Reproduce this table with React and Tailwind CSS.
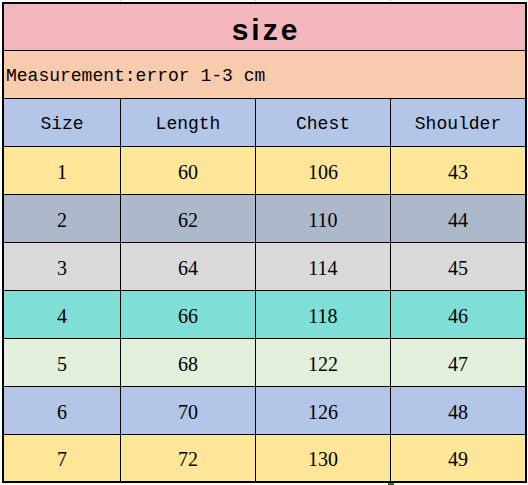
import React from "react";

const rows = [
  { size: "1", length: "60", chest: "106", shoulder: "43", bg: "bg-[#FFE699]" },
  { size: "2", length: "62", chest: "110", shoulder: "44", bg: "bg-[#ADB9CA]" },
  { size: "3", length: "64", chest: "114", shoulder: "45", bg: "bg-[#D9D9D9]" },
  { size: "4", length: "66", chest: "118", shoulder: "46", bg: "bg-[#7FDED6]" },
  { size: "5", length: "68", chest: "122", shoulder: "47", bg: "bg-[#E2EFDA]" },
  { size: "6", length: "70", chest: "126", shoulder: "48", bg: "bg-[#B4C6E7]" },
  { size: "7", length: "72", chest: "130", shoulder: "49", bg: "bg-[#FFE699]" },
];

const headers = ["Size", "Length", "Chest", "Shoulder"];

function App() {
  return (
    <div className="w-[528px] h-[485px] bg-white overflow-hidden">
      {/* faint sheet gridlines above the table */}
      <div className="h-[2px] ml-[2px] grid grid-cols-[119px_135px_135px_134px]">
        <div className="border-r border-[#d4d4d4]" />
        <div className="border-r border-[#d4d4d4]" />
        <div className="border-r border-[#d4d4d4]" />
        <div />
      </div>

      <div className="flex ml-[2px]">
        <div className="w-[525px] border-2 border-black text-black">
          <div className="h-[47px] border-b border-black bg-[#F4B6BD] flex items-center justify-center">
            <span className="text-[30px] font-bold tracking-[3px] pl-[3px] pt-[4px] font-['Liberation_Sans',sans-serif]">
              size
            </span>
          </div>

          <div className="h-[48px] border-b border-black bg-[#F8CBAD] flex items-center pl-[2px] pt-[3px]">
            <span className="text-[18px] font-['Liberation_Mono',monospace]">
              Measurement:error 1-3 cm
            </span>
          </div>

          <div className="h-[48px] border-b border-black bg-[#B4C6E7] grid grid-cols-[117px_135px_135px_134px]">
            {headers.map((h, i) => (
              <div
                key={h}
                className={`flex items-center justify-center pt-[3px] text-[18px] font-['Liberation_Mono',monospace] ${
                  i < 3 ? "border-r border-black" : ""
                }`}
              >
                {h}
              </div>
            ))}
          </div>

          {rows.map((r, idx) => (
            <div
              key={r.size}
              className={`${idx < rows.length - 1 ? "h-[48px] border-b border-black" : "h-[46px]"} ${r.bg} grid grid-cols-[117px_135px_135px_134px]`}
            >
              {[r.size, r.length, r.chest, r.shoulder].map((v, i) => (
                <div
                  key={i}
                  className={`flex items-center justify-center pt-[2px] text-[20px] font-['Liberation_Serif',serif] ${
                    i < 3 ? "border-r border-black" : ""
                  }`}
                >
                  {v}
                </div>
              ))}
            </div>
          ))}
        </div>

        {/* row ticks to the right of the table */}
        <div className="w-[2px] flex flex-col pt-[2px]">
          <div className="h-[47px] border-b border-[#c8c8c8]" />
          {Array.from({ length: 9 }).map((_, i) => (
            <div key={i} className="h-[48px] border-b border-[#c8c8c8]" />
          ))}
        </div>
      </div>

      {/* fill handle */}
      <div className="flex ml-[388px]">
        <div className="w-[6px] h-[3px] bg-[#1E7B34]" />
      </div>
    </div>
  );
}

export default App;
